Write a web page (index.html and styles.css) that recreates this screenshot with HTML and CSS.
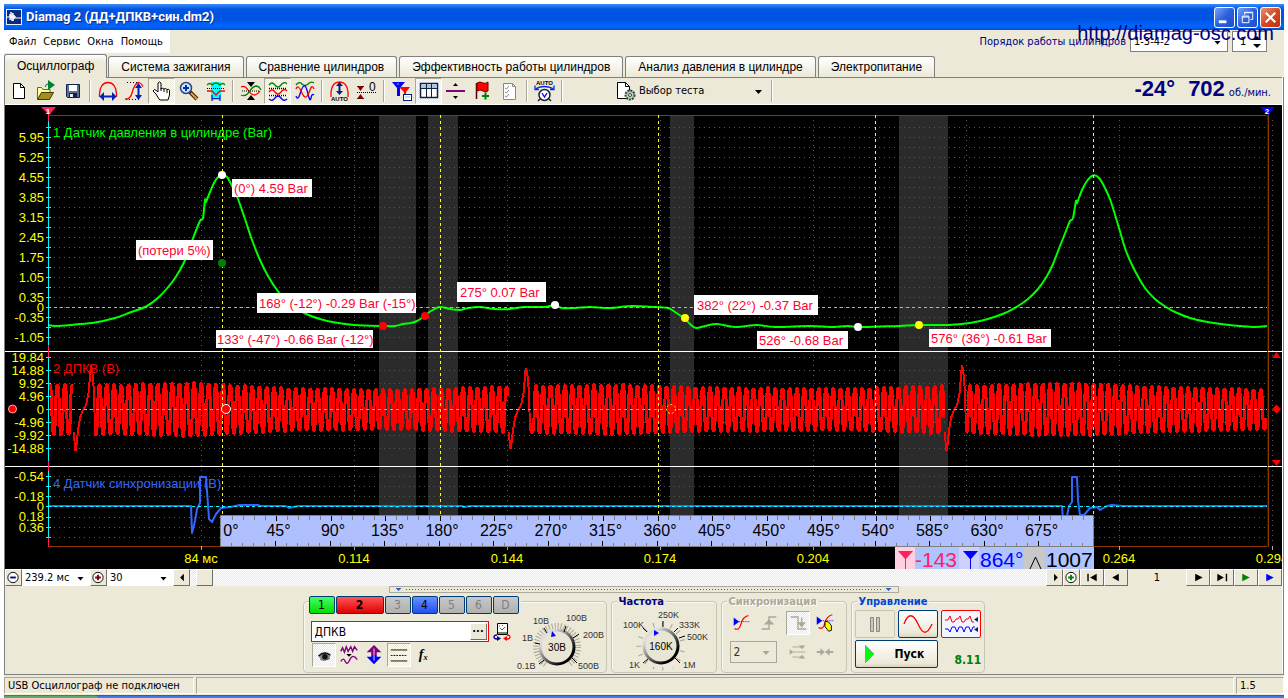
FILE: index.html
```html
<!DOCTYPE html>
<html lang="ru">
<head>
<meta charset="utf-8">
<title>Diamag 2</title>
<link rel="stylesheet" href="styles.css">
</head>
<body>
<div class="window">
  <header class="titlebar">
    <svg class="app-icon" viewBox="0 0 16 16"><rect width="16" height="16" fill="#e8f0ff"/><rect x="1" y="1" width="14" height="14" fill="#0a2a7a"/><path d="M1 8h3V5v6l1-6V3l1 9 1-8v8l1-6v4l1-3v2h6" fill="none" stroke="#fff"/></svg>
    <h1 class="title">Diamag 2 (ДД+ДПКВ+син.dm2)</h1>
    <button class="win-btn" aria-label="Свернуть"><svg viewBox="0 0 20 20"><rect x="4" y="13" width="8" height="3" fill="#fff"/></svg></button>
    <button class="win-btn" aria-label="Восстановить"><svg viewBox="0 0 20 20" fill="none" stroke="#fff"><path d="M7 7V4.500h8.500V12H13M7 5h8.500M4.500 8.500h7v7h-7zM4.500 9.500h7"/></svg></button>
    <button class="win-btn close" aria-label="Закрыть"><svg viewBox="0 0 20 20"><path d="M5 5l10 10M15 5L5 15" stroke="#fff" stroke-width="2.200"/></svg></button>
  </header>

  <div class="menurow">
    <nav class="menu"><button>Файл</button><button>Сервис</button><button>Окна</button><button>Помощь</button></nav>
    <div class="order">
      <label for="order">Порядок работы цилиндров</label>
      <span class="drop order-drop"><select id="order"><option>1-3-4-2</option></select></span>
      <span class="spin"><input type="text" value="1" aria-label="Цилиндр"><svg viewBox="0 0 8 14"><path d="M4 1l4 4H0zM0 9h8l-4 4z"/></svg></span>
      <a class="site" href="#">http://diamag-osc.com</a>
    </div>
  </div>

  <nav class="tabs">
    <button class="tab active">Осциллограф</button><button class="tab">Система зажигания</button><button class="tab">Сравнение цилиндров</button><button class="tab">Эффективность работы цилиндров</button><button class="tab">Анализ давления в цилиндре</button><button class="tab">Электропитание</button>
  </nav>

  <main class="page">
    <div class="toolbar">
      <button class="tool" aria-label="Новый"><svg viewBox="0 0 24 24"><path d="M6.500 4.500h7l4 4v11h-11z" fill="#fff" stroke="#000"/><path d="M13.500 4.500v4h4" fill="none" stroke="#000"/></svg></button>
      <button class="tool" aria-label="Открыть"><svg viewBox="0 0 24 24"><path d="M3.500 20.500v-12h4l1.500 2h7v3" fill="#ffffa0" stroke="#806000"/><path d="M3.500 20.500l4-7h12l-4 7z" fill="#a09020" stroke="#403800"/><path d="M11 8q1-4 4-3" fill="none" stroke="#007020"/><path d="M14 1l7 5-7 5z" fill="#008030"/></svg></button>
      <button class="tool" aria-label="Сохранить"><svg viewBox="0 0 24 24"><path d="M5.500 5.500h13v13h-12l-1-1z" fill="#607090" stroke="#102050"/><rect x="8" y="6" width="8" height="6" fill="#fff"/><rect x="8" y="14" width="8" height="4" fill="#102050"/><rect x="9" y="15" width="3" height="3" fill="#eee"/></svg></button>
      <span class="sep"></span>
      <button class="tool" aria-label="Масштаб времени"><svg viewBox="0 0 24 24" fill="none"><path d="M3.500 18v-3C3.500 8 7 3.500 12 3.500S20.500 8 20.500 15v3" stroke="#f00" stroke-width="1.300"/><path d="M5 17.500h14" stroke="#0020c0" stroke-width="2"/><path d="M8 13v9l-4.500-4.500zM16 13v9l4.500-4.500z" fill="#0020c0"/></svg></button>
      <button class="tool" aria-label="Масштаб амплитуды"><svg viewBox="0 0 24 24" fill="none"><path d="M4 3.500h12M3 20.500h14" stroke="#000" stroke-dasharray="1 2"/><path d="M2 20q5 1 7-6Q12 3 16 3.500q3 1 4 4" stroke="#f00" stroke-width="1.300"/><path d="M15.500 6v13" stroke="#0020c0" stroke-width="2"/><path d="M12 9l3.500-5L19 9zM12 16h7l-3.500 5z" fill="#0020c0"/></svg></button>
      <button class="tool pressed" aria-label="Рука"><svg viewBox="0 0 24 24"><path d="M9 20l-3-5-3-3q1-3 4 0l1 1V4q1.500-2 3 0v6q1-1.500 3 0 2-1 3 .5 2-1 2.500 1V16l-1.500 5H10z" fill="#fff" stroke="#000"/><path d="M11 9v3M14 10v3M17 11v3" stroke="#000"/></svg></button>
      <button class="tool" aria-label="Лупа"><svg viewBox="0 0 24 24"><path d="M13 13l7 7" stroke="#402010" stroke-width="4"/><path d="M14 14l6 6" stroke="#e8a020" stroke-width="2"/><circle cx="9" cy="9" r="5.500" fill="#c8e8ff" stroke="#304080" stroke-width="1.500"/><path d="M6 9h6M9 6v6" stroke="#0030b0" stroke-width="2"/></svg></button>
      <button class="tool" aria-label="Окно"><svg viewBox="0 0 24 24" fill="none"><rect x="7" y="3" width="10" height="15" fill="#0ff"/><path d="M3 6q3-3 5 0 4-4 8 0 3-3 5 0" stroke="#080" stroke-width="1.300"/><path d="M3 9.500h18" stroke="#000" stroke-dasharray="1 1"/><path d="M3 12h5l4 4 4-4h5" stroke="#f00" stroke-width="1.300"/><path d="M8 16v6M16 16v6M8 19.500h8" stroke="#0020c0" stroke-width="1.300"/></svg></button>
      <span class="sep"></span>
      <button class="tool" aria-label="Совместить"><svg viewBox="0 0 24 24" fill="none"><path d="M2 8q4-2 7 3t7 5q3-1 5-4" stroke="#f00" stroke-width="1.300"/><path d="M2 16q5 2 8-3t7-6q3 0 5 4" stroke="#080" stroke-width="1.300"/><path d="M3 12h18" stroke="#000" stroke-dasharray="1 1"/><path d="M8 3h8l-4 5zM8 21h8l-4-5z" fill="#000"/></svg></button>
      <button class="tool pressed" aria-label="Разнести"><svg viewBox="0 0 24 24" fill="none" stroke-width="1.300"><path d="M3 6q3-4 6 0t6 0 6-1" stroke="#080"/><path d="M3 13q3-4 6 0t6 0 6-1" stroke="#f00"/><path d="M3 20q3 3 6-1t6 0 6 1" stroke="#00f"/><path d="M3 9.500h18M3 16.500h18" stroke="#000" stroke-dasharray="1 1"/></svg></button>
      <button class="tool" aria-label="Наложить"><svg viewBox="0 0 24 24" fill="none" stroke-width="1.300"><path d="M3 6q3-4 6-1t6 0 6-1" stroke="#080"/><path d="M3 17q2 5 4-2t4-8 4 8 3 4 3-3" stroke="#00f"/><path d="M3 10q2-5 5 2t5 6 4-7 4-1" stroke="#f00"/></svg></button>
      <span class="sep"></span>
      <button class="tool" aria-label="Авто"><svg viewBox="0 0 24 24" fill="none"><path d="M3 18V13Q4 3 11.500 3T20 13v5" stroke="#f00" stroke-width="1.300"/><path d="M11.500 4v10" stroke="#002080" stroke-width="2"/><path d="M8 7l3.500-4L15 7zM8 12h7l-3.500 4z" fill="#002080"/><text x="3" y="22" class="icon-text">AUTO</text></svg></button>
      <button class="tool" aria-label="Ноль"><svg viewBox="0 0 24 24"><path d="M2 7h7l-3.500 5zM2 20h7l-3.500-5z" fill="#800000"/><path d="M2 7.500h7M2 19.500h7" stroke="#800000"/><path d="M2 13.500h19" stroke="#000" stroke-dasharray="1 1"/><text x="14" y="12" class="icon-plain">0</text></svg></button>
      <span class="sep"></span>
      <button class="tool" aria-label="Маркеры"><svg viewBox="0 0 24 24"><path d="M2 3h13l-5 6v8H7V9z" fill="#00f"/><path d="M9 8h11l-4 5v6h-2v-6z" fill="#f00"/><rect x="13.500" y="15.500" width="8" height="6" fill="#fff" stroke="#002080"/><path d="M15 18h5M7 5h2" stroke="#9bf"/></svg></button>
      <button class="tool pressed" aria-label="Таблица"><svg viewBox="0 0 24 24"><rect x="3.500" y="4.500" width="17" height="14" fill="#fff" stroke="#102040" stroke-width="1.500"/><path d="M4 6h16v3H4z" fill="#9ec8f0"/><path d="M4 9.500h16M9.500 5v13M14.500 5v13" stroke="#102040"/></svg></button>
      <button class="tool" aria-label="Линия"><svg viewBox="0 0 24 24"><path d="M2 11h19v2H2z" fill="#800080"/><path d="M9 7h5l-2.500-3zM9 17h5l-2.500 3z"/></svg></button>
      <button class="tool" aria-label="Флаг"><svg viewBox="0 0 24 24"><path d="M5.500 4v16" stroke="#500" stroke-width="1.500"/><path d="M6 4q3-2 6 0 3 1 5-1v9q-3 2-5 0-3-2-6 0z" fill="#f00" stroke="#700"/><path d="M11 17h7M14.500 13.500v7" stroke="#008000" stroke-width="2"/></svg></button>
      <button class="tool" aria-label="Отчёт"><svg viewBox="0 0 24 24" fill="#fff" stroke="#888"><path d="M5.500 4.500h9l3 3v13h-12z"/><path d="M14.500 4.500v3h3M7 9l1.500 1L11 7M7 13l1.500 1L11 11M7 17l1.500 1L11 15" fill="none"/></svg></button>
      <span class="sep"></span>
      <button class="tool" aria-label="Автотест"><svg viewBox="0 0 24 24"><text x="3" y="6" class="icon-text">AUTO</text><path d="M3 9.500q8-4 17 0M2 6.500v4h4M21 6.500v4h-4" fill="none" stroke="#0030e0" stroke-width="1.300"/><circle cx="11.500" cy="16" r="5.500" fill="#fff" stroke="#223" stroke-width="1.500"/><path d="M9 14l2.500 4 2.500-4" fill="none" stroke="#00f" stroke-width="1.300"/><path d="M7 20l-2 2M16 20l2 2" stroke="#223" stroke-width="1.500"/></svg></button>
      <span class="sep"></span>
      <span class="drop test"><svg viewBox="0 0 20 20"><path d="M1.500 1.500h8l4 4v12h-12z" fill="#fff" stroke="#000"/><path d="M9.500 1.500v4h4" fill="none" stroke="#000"/><circle cx="14" cy="14" r="4.500" fill="#b8d0b0" stroke="#344" stroke-width="2" stroke-dasharray="2 1"/><circle cx="14" cy="14" r="1.500" fill="#fff" stroke="#344"/></svg><select aria-label="Тест"><option>Выбор теста</option></select></span>
      <span class="sep"></span>
      <output class="readout"><b>-24°</b><b>702</b><span>об./мин.</span></output>
    </div>

    <svg class="scope" id="scope" viewBox="5 105 1277 464" role="img" aria-label="Осциллограмма">
      <rect x="5" y="105" width="1277" height="464"/>
      <g class="band"><path d="M379 116h37v399h-37zM428 116h30v399h-30zM670 116h24v399h-24zM899 116h49v399h-49z"/></g>
      <g id="grid"></g>
      <path d="M48 115.500h1221M48 546.500h1221M1268.500 115v432" stroke="#8b3500"/>
      <path d="M5 351.500h1277M5 466.500h1277" stroke="#fff"/>
      <g class="channel-name">
        <text x="53" y="137" fill="#0f0">1 Датчик давления в цилиндре (Bar)</text>
        <text x="53" y="373" fill="#f00">2 ДПКВ (В)</text>
        <text x="53" y="488" fill="#36f">4 Датчик синхронизации (В)</text>
      </g>
      <g id="traces"></g>
      <path d="M222.500 115v400M440.500 115v400M658.500 115v400M875.500 115v400M1093.500 115v424" stroke="#ff0" stroke-dasharray="3 3"/>
      <path d="M48 307.500h1219M48 409.500h1219M48 506.500h1219" stroke="#0ff" stroke-dasharray="3 3"/>
      <path d="M48.500 112v435" stroke="#ff2060"/>
      <path d="M48.500 121v224M48.500 357v104M48.500 471v67" stroke="#0ff"/>
      <path d="M1267.500 112v435" stroke="#00f"/>
      <path d="M41 107h15l-7 8z" fill="#ff2060"/><path d="M1260 107h15l-7 8z" fill="#00f"/>
      <g class="marker-num"><text x="48" y="114">1</text><text x="1267" y="114">2</text></g>
      <g fill="#f00"><circle cx="12.500" cy="409" r="4" stroke="#faa"/><circle cx="226" cy="409" r="4.500" stroke="#fff"/><circle cx="671" cy="409" r="4.500" stroke="#ff0" stroke-dasharray="2 2"/>
      <path d="M1272 358h9l-4.500-6zM1272 460h9l-4.500 6zM1272 409l4.500-4.500 4.500 4.500-4.500 4.500z"/></g>
      <path d="M232 179h80v18h-80zM136 240h77v20h-77zM257 293h159v20H257zM216 330h157v18H216zM457 282h89v20h-89zM694 295h124v20H694zM757 331h91v18h-91zM929 329h122v18H929z" fill="#fff"/>
      <g class="points"><circle cx="222" cy="175" r="4" fill="#fff"/><circle cx="222" cy="263" r="4" fill="#008000"/><circle cx="383" cy="326" r="4" fill="#f00"/><circle cx="425" cy="316" r="4" fill="#f00"/><circle cx="555" cy="305" r="4" fill="#fff"/><circle cx="685" cy="318" r="4" fill="#ff0"/><circle cx="858" cy="327" r="4" fill="#fff"/><circle cx="919" cy="325" r="4" fill="#ff0"/></g>
      <g class="note"><text x="234" y="193">(0°) 4.59 Bar</text><text x="138" y="255">(потери 5%)</text><text x="259" y="308">168° (-12°) -0.29 Bar (-15°)</text><text x="217" y="344">133° (-47°) -0.66 Bar (-12°)</text><text x="460" y="297">275° 0.07 Bar</text><text x="697" y="310">382° (22°) -0.37 Bar</text><text x="759" y="345">526° -0.68 Bar</text><text x="931" y="343">576° (36°) -0.61 Bar</text></g>
      <g id="axis"></g>
      <g id="ruler"></g>
      <path d="M895 547h20v22h-20z" fill="#ffd0e0"/><path d="M915 547h44v22h-44zM979 547h45v22h-45zM1045 547h49v22h-49z" fill="#b0c4ff"/><path d="M959 547h20v22h-20z" fill="#d0d0ff"/><path d="M1024 547h21v22h-21z" fill="#c8c8c8"/>
      <path d="M898 551h15l-7 8v10h-1v-10z" fill="#ff2060"/><path d="M963 551h15l-7 8v10h-1v-10z" fill="#00f"/><path d="M1030 569l5.500-12 5.500 12" fill="none" stroke="#000"/>
      <g class="measure"><text x="915" y="567" fill="#ff2060">-143</text><text x="980" y="567" fill="#00f">864°</text><text x="1046" y="567">1007</text></g>
    </svg>

    <div class="navrow">
      <button class="nav round" aria-label="Сжать"><svg viewBox="0 0 16 16"><circle cx="8" cy="8" r="5.500" fill="#fff" stroke="#000"/><path d="M5 8h6" stroke="#000080" stroke-width="2"/></svg></button>
      <span class="drop span"><select aria-label="Развёртка"><option>239.2 мс</option></select></span>
      <button class="nav round" aria-label="Растянуть"><svg viewBox="0 0 16 16"><circle cx="8" cy="8" r="5.500" fill="#fff" stroke="#000"/><path d="M5 8h6M8 5v6" stroke="#800000" stroke-width="2"/></svg></button>
      <span class="drop step"><select aria-label="Шаг"><option>30</option></select></span>
      <button class="nav" aria-label="Влево"><svg viewBox="0 0 16 16"><path d="M10 4v8L6 8z"/></svg></button>
      <div class="trough"><div class="thumb"></div></div>
      <button class="nav" aria-label="Вправо"><svg viewBox="0 0 16 16"><path d="M7 4v8l4-4z"/></svg></button>
      <button class="nav round" aria-label="Добавить"><svg viewBox="0 0 16 16"><circle cx="8" cy="8" r="5.500" fill="#fff" stroke="#000"/><path d="M5 8h6M8 5v6" stroke="#008000" stroke-width="2"/></svg></button>
      <button class="nav wide" aria-label="Первый"><svg viewBox="0 0 16 16"><path d="M13 4v8L6 8zM3 4h1.500v8H3z"/></svg></button>
      <button class="nav wide" aria-label="Назад"><svg viewBox="0 0 16 16"><path d="M11 4v8L4 8z"/></svg></button>
      <output class="frame">1</output>
      <button class="nav wide" aria-label="Вперёд"><svg viewBox="0 0 16 16"><path d="M5 4v8l8-4z"/></svg></button>
      <button class="nav wide" aria-label="Последний"><svg viewBox="0 0 16 16"><path d="M3 4v8l7-4zM12 4h1.500v8H12z"/></svg></button>
      <button class="nav wide" aria-label="Воспроизвести"><svg viewBox="0 0 16 16"><path d="M4 4v8l8-4z" fill="#008000"/></svg></button>
      <button class="nav wide" aria-label="Повтор"><svg viewBox="0 0 16 16"><path d="M4 4v8l8-4z" fill="#00f"/></svg></button>
    </div>
    <div class="splitter"><i></i><span></span><i></i></div>

    <div class="panels">
      <section class="group channels">
        <div class="channel-left">
          <div class="ch-row"><button class="ch green">1</button><button class="ch red">2</button><button class="ch">3</button><button class="ch blue">4</button><button class="ch">5</button><button class="ch">6</button><button class="ch">D</button></div>
          <div class="name-row"><div class="name-box"><input type="text" value="ДПКВ" aria-label="Имя канала"><button aria-label="Выбрать">···</button></div>
            <svg viewBox="0 0 18 18"><path d="M4.500 .5h10v11h-10z" fill="#fff" stroke="#000"/><path d="M5 9h9v2H5z" fill="#6a8a6a"/><path d="M7 5l2 2 3-3M6 3h1M9 2.500h1" fill="none" stroke="#666"/><path d="M4 12q-3 0-3 2 0 2 3 2" fill="none" stroke="#000090" stroke-width="1.300"/><path d="M4 13l4 2.500-4 2.500z" fill="#000090"/><path d="M14 12q3 0 3 2 0 2-3 2" fill="none" stroke="#f00" stroke-width="1.300"/><path d="M14 13l-4 2.500 4 2.500z" fill="#f00"/></svg></div>
          <div class="icon-row">
            <button class="mini pressed" aria-label="Видимость"><svg viewBox="0 0 24 24"><path d="M6 13q6-7 13-1l-1 4q-5 3-10 0z" fill="#888"/><path d="M6 13q6-6 13-1" fill="none" stroke="#111" stroke-width="1.500"/><circle cx="13" cy="14" r="3" fill="#111"/><path d="M8 17q5 2 10-1" fill="none" stroke="#444"/></svg></button>
            <button class="mini" aria-label="Фильтр"><svg viewBox="0 0 24 24" fill="none" stroke="#800080" stroke-width="1.500"><path d="M3 8l2-4 2 5 2-6 2 5 3-5 2 5 2-5 3 4"/><path d="M3 19q3-5 5 0t5-2 8 0"/><path d="M9 11h6l-3 3z" fill="#000" stroke="none"/></svg></button>
            <button class="mini" aria-label="Инверсия"><svg viewBox="0 0 24 24"><path d="M12 1l8 8h-5v3H9V9H4z" fill="#800080"/><path d="M12 22l8-8h-5v-2H9v2H4z" fill="#00f"/><path d="M12 5v13" stroke="#ece9d8"/></svg></button>
            <button class="mini pressed" aria-label="Линии"><svg viewBox="0 0 24 24" stroke="#000"><path d="M3 6.500h18M3 18.500h18"/><path d="M3 12.500h18" stroke-dasharray="2 1"/></svg></button>
            <button class="mini fx">fₓ</button>
          </div>
        </div>
        <svg class="knob" viewBox="512 600 94 72"><g class="knob-face" transform="translate(557 646)"><circle r="21" fill="none" stroke="#aaa592" stroke-width="6" stroke-dasharray="1 2"/><path d="M-17 24L0 4l17 20z" fill="#ece9d8"/><circle r="17" fill="#e8e5d5" stroke="url(#rim)" stroke-width="3"/><path d="M-13 13l-5 4M-17-3l-5-1M-10-14l-3-5M7-15l2-6M16-9l6-4M15 11l5 5" stroke="#000"/><path d="M-5-16l4 5-5 1z" fill="#00f"/></g>
          <g class="knob-text"><text x="517" y="668">0.1В</text><text x="522" y="640">1В</text><text x="533" y="623">10В</text><text x="566" y="620">100В</text><text x="583" y="637">200В</text><text x="578" y="668">500В</text></g><text x="557" y="650" class="knob-value">30В</text></svg>
      </section>
      <section class="group freq"><h2>Частота</h2>
        <svg class="knob" viewBox="612 604 103 68"><defs><linearGradient id="rim" x1="0" y1="0" x2="1" y2="1"><stop offset=".2" stop-color="#ddd"/><stop offset=".8" stop-color="#000"/></linearGradient></defs><g transform="translate(661 646)"><circle r="22" fill="none" stroke="#aaa592" stroke-width="5" stroke-dasharray="1 8" stroke-dashoffset="4"/><path d="M-15 21L0 0l15 21z" fill="#ece9d8"/><circle r="17" fill="#e8e5d5" stroke="url(#rim)" stroke-width="3"/><path d="M-13 13l-5 4M-14-14l-4-4M2-19v-6M13-14l4-4M18-8l6-2M14 12l5 5" stroke="#000"/><path d="M-7-16l5 3-5 3z" fill="#00f"/></g>
          <g class="knob-text"><text x="629" y="668">1K</text><text x="623" y="628">100K</text><text x="658" y="618">250K</text><text x="679" y="628">333K</text><text x="687" y="640">500K</text><text x="683" y="668">1M</text></g><text x="661" y="650" class="knob-value">160K</text></svg>
      </section>
      <section class="group sync"><h2>Синхронизация</h2>
        <div class="sync-grid">
          <button class="sy" aria-label="Синхросигнал"><svg viewBox="0 0 24 24" fill="none"><path d="M5 18q5 3 7-5t8-9" stroke="#f00" stroke-width="1.300"/><path d="M8 10.500h13" stroke="#00f" stroke-dasharray="1 1"/><path d="M4 6v9l6-4.500z" fill="#00f"/></svg></button>
          <button class="sy" disabled aria-label="Фронт"><svg viewBox="0 0 24 24" fill="none" stroke="#aca899" stroke-width="1.500"><path d="M4 18.500h8V5.500h8"/><path d="M8 13l4-4 4 4z" fill="#aca899"/></svg></button>
          <button class="sy pressed" disabled aria-label="Спад"><svg viewBox="0 0 24 24" fill="none" stroke="#aca899" stroke-width="1.500"><path d="M4 5.500h8v13h9M16 6v8"/><path d="M13 12h6l-3 4z" fill="#aca899"/></svg></button>
          <button class="sy" aria-label="Курсор"><svg viewBox="0 0 24 24" fill="none"><path d="M5 17q5 3 7-5t8-9" stroke="#f00" stroke-width="1.300"/><path d="M8 9.500h14" stroke="#00f" stroke-dasharray="1 1"/><path d="M3 5v9l6-4.500z" fill="#00f"/><path d="M12 10l4 1 3 4v5l-3 1-4-5z" fill="#ff0" stroke="#000"/></svg></button>
          <span class="drop source"><select aria-label="Источник" disabled><option>2</option></select></span>
          <button class="sy" disabled aria-label="Уровень"><svg viewBox="0 0 24 24" stroke="#aca899" fill="#aca899"><path d="M7 6.500h10M7 17.500h10M7 12h14" fill="none"/><path d="M4 9v6l4-3zM14 5h7l-3.500 4zM14 19h7l-3.500-4z" stroke="none"/></svg></button>
          <button class="sy" disabled aria-label="Сжатие"><svg viewBox="0 0 24 24" fill="#aca899"><path d="M3 11h4V8l5 4-5 4v-3H3zM21 11h-4V8l-5 4 5 4v-3h4z"/></svg></button>
        </div>
      </section>
      <section class="group control"><h2>Управление</h2>
        <div class="control-grid">
          <button class="big off" aria-label="Пауза"><svg viewBox="0 0 38 26" fill="#c8c6bb" stroke="#8a8880"><path d="M14.500 6.500h3v14h-3zM20.500 6.500h3v14h-3z"/></svg></button>
          <button class="big" aria-label="Синус"><svg viewBox="0 0 38 26"><path d="M5 13C9 2 14 2 19 13s9 11 14 0" fill="none" stroke="#f00" stroke-width="1.300"/></svg></button>
          <button class="big alert" aria-label="Сигналы"><svg viewBox="0 0 38 26" fill="none"><path d="M3 9h3l2-4 2 6h2l2-3h2l2-3 2 6h2l2-3h2l2-3 2 6h2" stroke="#f00"/><path d="M3 18h3l2 3 2-5h3l2 5 2-5h3l2 5 2-5h3l2 5 2-5h2" stroke="#00f"/><path d="M36 6v5l-4-2.500zM36 16v5l-4-2.500z" fill="#102060"/></svg></button>
          <button class="big start"><svg viewBox="0 0 10 18"><path d="M0 0v18l9-9z" fill="#0f0" stroke="#7a9"/></svg>Пуск</button>
          <output class="version">8.11</output>
        </div>
      </section>
    </div>
  </main>
  <footer class="status"><span class="conn">USB Осциллограф не подключен</span><span class="fill"></span><span class="ver">1.5</span></footer>
  <div class="taskbar"><i></i></div>
</div>
<script src="script.js"></script>
</body>
</html>
```
FILE: styles.css
```css
* { box-sizing: border-box; }
body { margin: 0; padding: 4px 4px 0; background: #fff; color: #000; font: 11px/14px "DejaVu Sans Condensed", "Noto Sans", sans-serif; }
button, select, input { font: inherit; color: inherit; margin: 0; }
button { padding: 0; border: 0; background: none; }
h1, h2 { margin: 0; }
svg { display: block; }
.window { background: #ece9d8; }

.titlebar { display: flex; align-items: center; gap: 2px; height: 26px; padding: 0 3px 0 2px; background: linear-gradient(#3a8cf8, #0054e3 20%, #0054e3 60%, #0066ff 85%, #0050d8); }
.app-icon { width: 16px; height: 16px; margin-right: 2px; }
.title { flex: 1; color: #fff; font: bold 13px/18px Roboto, "Noto Sans", sans-serif; text-shadow: 1px 1px #0a2a8a; }
.win-btn { width: 21px; height: 21px; border: 1px solid #fff; border-radius: 3px; background: linear-gradient(135deg, #7aa2f5, #2a60dc 50%, #1c50c8); }
.win-btn.close { background: linear-gradient(135deg, #f09070, #d84820 50%, #c03010); }

.menurow { display: flex; justify-content: space-between; align-items: flex-start; height: 24px; }
.menu { display: flex; gap: 7px; padding: 5px 7px 4px 5px; background: #fff; }
.order { position: relative; display: flex; align-items: center; gap: 4px; padding: 1px 17px 0 0; color: navy; }
.order-drop { width: 98px; height: 21px; border: 1px solid #808080; background: #fff; color: #000; }
.spin { display: flex; align-items: center; width: 35px; height: 21px; padding: 0 5px; border: 1px solid #808080; background: #fff; color: #000; }
.spin input { flex: 1; min-width: 0; padding: 0 2px; border: 0; background: none; }
.spin svg { width: 8px; height: 14px; }
.site { position: absolute; right: 10px; top: -9px; color: navy; font: 20px/24px "Liberation Sans", sans-serif; text-decoration: none; white-space: nowrap; }

.drop { position: relative; display: flex; align-items: center; }
.drop select { flex: 1; min-width: 0; padding: 0 3px; border: 0; outline: 0; background: none; appearance: none; }
.drop::after { content: ""; position: absolute; right: 6px; top: calc(50% - 1px); width: 7px; height: 4px; background: #000; clip-path: polygon(0 0, 100% 0, 50% 100%); }

.tabs { display: flex; align-items: flex-end; gap: 2px; height: 23px; }
.tab { height: 21px; padding: 0 12px; border: 1px solid #808080; border-bottom: 0; border-radius: 3px 3px 0 0; background: linear-gradient(#fff, #ece9d8); font: 12px/19px "Liberation Sans", sans-serif; white-space: nowrap; }
.tab.active { height: 24px; margin: 0 -1px -1px 0; position: relative; background: linear-gradient(#fff, #ece9d8 30%); }

.page { border-left: 1px solid #808080; border-right: 1px solid #808080; border-bottom: 1px solid #808080; box-shadow: inset -1px 0 #fff; padding-right: 1px; }
.toolbar { display: flex; align-items: center; height: 28px; border-top: 1px solid #808080; border-bottom: 1px solid #fff; }
.tool { width: 27px; height: 26px; padding: 1px 1px 1px 2px; }
.tool svg { width: 24px; height: 24px; }
.pressed { border: 1px solid; border-color: #aca899 #fff #fff #aca899; background: repeating-conic-gradient(#fff 0 25%, #ece9d8 0 50%) 0 0 / 2px 2px; }
.tool.pressed { padding: 0 0 0 1px; }
.icon-text { font: bold 6px "Liberation Sans", sans-serif; fill: #000; }
.icon-plain { font: 12px "Liberation Sans", sans-serif; fill: #000; }
.sep { width: 8px; height: 22px; background: linear-gradient(90deg, #aca899 50%, #fff 50%) center / 2px 100% no-repeat; }
.test { width: 202px; padding-left: 50px; }
.test svg { width: 20px; height: 20px; }
.readout { display: flex; align-items: baseline; margin-left: auto; padding-right: 11px; color: navy; font: 11px/24px "DejaVu Sans Condensed", sans-serif; }
.readout b { font: bold 22px/24px "Liberation Sans", sans-serif; margin-right: 13px; }
.readout b + b { margin-right: 4px; }

.scope { width: 100%; height: auto; font-family: "Liberation Sans", sans-serif; }
.band { fill: #2b2b2b; }
.channel-name, .note { font-size: 13px; }
.note { fill: #ff0030; }
.axis-text { font-size: 13px; fill: #ff0; }
.ruler-text { font-size: 16px; fill: #000; }
.measure { font-size: 21px; }
.marker-num { font-size: 8px; font-weight: bold; fill: #fff; text-anchor: middle; }
.trace { fill: none; stroke-width: 2; stroke-linejoin: round; }
.trace.dense { stroke-width: 3; }

.navrow { display: flex; height: 17px; }
.nav { flex: none; width: 17px; border: 1px solid; border-color: #fff #716f64 #716f64 #fff; background: #ece9d8; }
.nav svg { width: 16px; height: 15px; margin: 0 auto; }
.nav.round svg { margin-left: -1px; }
.nav.wide { width: 24px; }
.navrow .drop { background: #fff; }
.span { width: 68px; }
.step { width: 66px; }
.trough { flex: 1; background: repeating-conic-gradient(#fff 0 25%, #ece9d8 0 50%) 0 0 / 2px 2px; }
.thumb { width: 17px; height: 17px; margin-left: 6px; border: 1px solid; border-color: #fff #716f64 #716f64 #fff; background: #ece9d8; }
.frame { width: 58px; text-align: center; line-height: 17px; }
.splitter { display: flex; align-items: center; width: 510px; height: 7px; margin: 0 auto; padding: 0 6px; gap: 4px; border: 1px solid #aca899; }
.splitter i { width: 6px; height: 3px; background: #2a5cc0; clip-path: polygon(0 0, 100% 0, 50% 100%); }
.splitter span { flex: 1; height: 1px; background: repeating-linear-gradient(90deg, #2a5cc0 0 1px, transparent 1px 3px); }

.panels { display: flex; justify-content: center; gap: 4px; padding: 8px 0 1px; }
.group { position: relative; height: 72px; border: 1px solid #c8c5b2; border-radius: 4px; box-shadow: inset 1px 1px #fafaf0; }
.group h2 { position: absolute; left: 5px; top: -7px; padding: 0 2px; background: #ece9d8; color: navy; font: bold 11px/14px "DejaVu Sans Condensed", sans-serif; }
.channels { display: flex; width: 304px; }
.channel-left { width: 208px; margin-top: -6px; padding-left: 5px; }
.ch-row { display: flex; gap: 1px; background: #ece9d8; width: 212px; }
.ch { flex: none; width: 26px; height: 18px; border: 1px solid #003c74; border-radius: 2px; background: linear-gradient(#c8c8c8, #b0b0b0); color: #808080; line-height: 16px; font-size: 12px; }
.ch.green { background: linear-gradient(#4f6, #0d0); color: #000; }
.ch.red { width: 48px; background: linear-gradient(#f55, #e00000); color: #000; font-weight: bold; }
.ch.blue { background: linear-gradient(#6a90ff, #2050f0); color: #000; }
.name-row { display: flex; align-items: center; gap: 4px; margin-top: 7px; }
.name-box { display: flex; width: 178px; height: 21px; margin-left: 2px; padding: 1px; border: 1px solid #f00; background: #fff; }
.name-box input { flex: 1; min-width: 0; padding: 0 2px; border: 0; background: none; font-size: 12px; }
.name-box button { width: 17px; height: 17px; border: 1px solid; border-color: #fff #716f64 #716f64 #fff; background: #ece9d8; line-height: 12px; font-weight: bold; }
.name-row svg { width: 18px; height: 18px; }
.icon-row { display: flex; gap: 1px; margin: 1px 0 0 3px; }
.mini { width: 24px; height: 24px; }
.mini svg { width: 22px; height: 22px; }
.mini:not(.pressed) svg { margin: 0 auto; }
.fx { font: italic bold 14px/22px "Liberation Serif", serif; }
.knob { width: 94px; height: 72px; margin-top: -1px; }
.freq { width: 106px; }
.freq .knob { width: 103px; height: 68px; margin-top: 2px; }
.knob-text { font: 9px "Liberation Sans", sans-serif; fill: #333; }
.knob-value { font: 10px "Liberation Sans", sans-serif; text-anchor: middle; }
.sync { width: 126px; }
.sync h2 { color: #aca899; text-shadow: 1px 1px #fff; }
.sync-grid { display: grid; grid-template-columns: repeat(4, 24px); gap: 5px 4px; padding: 9px 0 0 8px; align-items: center; }
.sy { width: 24px; height: 24px; }
.sy svg { width: 22px; height: 22px; }
.source { grid-column: span 2; width: 47px; height: 22px; border: 1px solid #aca899; }
.source select { opacity: 1; color: #333; font-size: 12px; }
.source::after { background: #aca899; }
.control { width: 134px; }
.control h2 { color: #0046d5; }
.control-grid { display: grid; grid-template-columns: repeat(3, 40px); gap: 2px 3px; padding: 8px 0 0 3px; }
.big { height: 28px; border: 1px solid #003c74; border-radius: 2px; background: linear-gradient(#fff, #ece9d8 85%, #d8d4c0); }
.big.off { border-color: #c8c5b2; background: #ece9d8; }
.big.alert { border-color: #f00; background: #f4f4ff; }
.start { grid-column: span 2; display: flex; align-items: center; gap: 20px; padding-left: 9px; font-weight: bold; font-size: 12px; }
.start svg { width: 10px; height: 18px; }
.version { color: #008000; font-weight: bold; font-size: 12px; align-self: end; padding: 0 0 1px 14px; }

.status { display: flex; gap: 2px; padding: 2px 0 1px; }
.status span { height: 17px; padding: 1px 3px; border: 1px solid; border-color: #aca899 #fff #fff #aca899; }
.conn { width: 190px; white-space: nowrap; }
.fill { flex: 1; }
.ver { width: 48px; }
.taskbar { height: 4px; background: linear-gradient(#1c4fc0, #3c8cf0 50%, #2a66dc); }
.taskbar i { display: block; width: 94px; height: 4px; border-radius: 0 4px 0 0; background: linear-gradient(#2f7a2f, #6cb86c 50%, #3c983c); }
```
FILE: script.js
```js
const NS = "http://www.w3.org/2000/svg";
const byId = (id) => document.getElementById(id);

function add(parent, name, attrs, text) {
  const node = document.createElementNS(NS, name);
  for (const key in attrs) node.setAttribute(key, attrs[key]);
  if (text !== undefined) node.textContent = text;
  parent.appendChild(node);
}

const levels = [];
for (let y = 127; y <= 337; y += 10) levels.push(y);
levels.push(357, 370, 383, 396, 409, 422, 435, 448, 476, 486, 496, 506, 517, 527, 537);
const times = [201, 354, 507, 660, 813, 966, 1119, 1272];

// Dotted grid
let rows = "";
for (const y of levels) rows += `M54 ${y + 0.5}H1267`;
let cols = "";
for (const x of times) cols += `M${x + 0.5} 120V545`;
add(byId("grid"), "path", { d: rows + cols, stroke: "#585858", "stroke-dasharray": "1 4" });

// Axis ticks and captions
const axis = byId("axis");
let ticks = "";
for (const y of levels) ticks += `M46 ${y + 0.5}h5`;
add(axis, "path", { d: ticks, stroke: "#0ff" });
const captions = [[307, "0"], [357, "19.84"], [370, "14.88"], [383, "9.92"], [396, "4.96"], [409, "0"],
  [422, "-4.96"], [435, "-9.92"], [448, "-14.88"], [476, "-0.54"], [496, "-0.18"], [506, "0"], [516, "0.18"], [527, "0.36"]];
for (let i = 0; i < 11; i++) captions.push([137 + i * 20, (5.95 - i * 0.7).toFixed(2)]);
for (const [y, value] of captions) add(axis, "text", { x: 44, y: y + 5, "text-anchor": "end", class: "axis-text" }, value);
["84 мс", "0.114", "0.144", "0.174", "0.204", "", "0.264", "0.294"].forEach((t, i) => {
  add(axis, "path", { d: `M${times[i] + 0.5} 546v4`, stroke: "#aaa" });
  add(axis, "text", { x: times[i], y: 563, "text-anchor": "middle", class: "axis-text" }, t);
});

// Crank angle ruler
const ruler = byId("ruler");
add(ruler, "path", { d: "M220.5 515.500h873v31h-873z", fill: "#b0c0ff", stroke: "#808080" });
let major = "", minor = "";
for (let i = 1; i < 80; i++) {
  const x = Math.round(221.5 + i * 10.9) + 0.5;
  if (i % 5 === 0) major += `M${x} 516v5M${x - 1} 541v5`;
  else minor += `M${x} 516v4M${x - 1} 543v3`;
}
add(ruler, "path", { d: minor, stroke: "#808080" });
add(ruler, "path", { d: major, stroke: "#000" });
for (let i = 0; i < 16; i++) {
  add(ruler, "text", { x: i ? 224 + i * 54.5 : 231, y: 536, "text-anchor": "middle", class: "ruler-text" }, `${i * 45}°`);
}

const line = (points) => "M" + points.map((p) => p.join(" ")).join("L");
function smooth(p) {
  let d = `M${p[0]}`;
  for (let i = 0; i < p.length - 1; i++) {
    const a = p[i - 1] || p[i], b = p[i], c = p[i + 1], e = p[i + 2] || c;
    d += `C${b[0] + (c[0] - a[0]) / 6} ${b[1] + (c[1] - a[1]) / 6} ${c[0] - (e[0] - b[0]) / 6} ${c[1] - (e[1] - b[1]) / 6} ${c[0]} ${c[1]}`;
  }
  return d;
}
const traces = byId("traces");

// Channel 1: cylinder pressure
add(traces, "path", { class: "trace", stroke: "#0f0", d: smooth([[48, 325], [56, 326], [75, 324.5], [95, 322.5], [115, 318], [130, 312.5], [147, 306], [160, 296], [173, 281], [180, 270], [186, 258], [192, 241], [200, 221], [203, 218], [205, 200], [206, 202], [208, 197], [214, 183], [219, 176], [222, 175], [227, 177], [232, 186], [238, 199], [245, 219], [252, 240], [260, 260], [268, 276], [277, 290], [286, 300], [295, 307], [305, 313.5], [320, 319], [335, 322.5], [354, 325], [383, 326], [395, 326], [403, 324], [411, 323], [417, 321], [424, 316.5], [431, 311], [440, 307], [450, 309], [460, 310], [468, 308], [480, 307], [495, 309], [510, 309], [525, 307], [545, 307], [555, 305], [562, 308], [575, 308], [590, 307], [610, 308], [632, 306], [655, 307], [668, 308], [675, 312], [685, 319], [690, 324], [696, 328], [705, 326], [717, 324], [735, 327], [757, 325], [775, 327], [810, 326], [830, 327], [848, 326], [858, 327], [880, 326.5], [900, 326], [919, 325], [948, 325], [970, 323], [988, 319], [1005, 313], [1018, 306], [1028, 299], [1038, 289], [1047, 276], [1053, 264], [1060, 246], [1066, 231], [1070, 221], [1073, 218], [1076, 201], [1077, 203], [1082, 190], [1087, 181], [1093, 175.5], [1099, 178], [1105, 188], [1111, 202], [1119, 228], [1126, 251], [1134, 269], [1145, 288], [1155, 299], [1166, 307], [1175, 312], [1190, 318], [1205, 321.5], [1225, 324.5], [1240, 326], [1255, 327], [1267, 326]]) });

// Channel 2: crankshaft sensor, teeth between the missing-tooth gaps
const peaks = [[48, 384], [120, 384], [190, 382], [240, 385], [300, 388], [400, 389], [500, 386], [610, 384], [650, 385], [700, 387], [850, 388], [940, 385], [970, 385], [1040, 383], [1090, 383], [1150, 386], [1267, 389]];
function amplitude(x) {
  for (let i = 1; i < peaks.length; i++) {
    const [x0, y0] = peaks[i - 1], [x1, y1] = peaks[i];
    if (x <= x1) return 409.5 - (y0 + (y1 - y0) * (x - x0) / (x1 - x0));
  }
  return 21;
}
function teeth(from, to, peak, period) {
  const out = [];
  for (let x = from; x <= to; x += 1) {
    const s = Math.cos((x - peak) / period * 2 * Math.PI);
    const shaped = Math.sign(s) * Math.pow(Math.abs(s), 0.6);
    out.push([x, Math.round(409.5 - amplitude(x) * shaped)]);
  }
  return out;
}
const gap = (x, low, high) => [[x - 1, 432], [x, low], [x + 1, low], [x + 3, 430], [x + 5, 418], [x + 8, 410], [x + 11, 405], [x + 14, 391], [x + 15, 374], [x + 16, high], [x + 17, high + 2], [x + 19, 392], [x + 20, 431]];
const burst = (points) => add(traces, "path", { class: "trace dense", "shape-rendering": "crispEdges", stroke: "#f00", d: line(points) });
const spike = (points) => add(traces, "path", { class: "trace", "shape-rendering": "crispEdges", stroke: "#f00", d: line(points) });
burst(teeth(49, 73, 50, 7.45));
spike(gap(75, 450, 366));
burst(teeth(95, 508, 99.5, 7.27));
spike(gap(510, 448, 369));
burst(teeth(531, 944, 536, 7.25));
spike(gap(946, 450, 366));
burst(teeth(966, 1266, 970, 7.27));

// Channel 4: synchronisation sensor
add(traces, "path", { class: "trace", stroke: "#36f", d: line([[48, 506], [191, 506], [192, 533], [195, 521], [197, 509], [200, 503], [200, 477], [206, 477], [208, 505], [209, 519], [212, 522], [216, 514], [221, 508], [230, 507], [240, 505], [258, 505], [260, 506], [286, 506], [289, 508], [298, 506], [395, 506], [397, 507], [400, 506], [462, 506], [464, 507], [470, 506], [1062, 506], [1063, 520], [1067, 516], [1069, 506], [1072, 502], [1072, 477], [1077, 477], [1078, 500], [1080, 515], [1084, 515], [1090, 508], [1097, 507], [1100, 510], [1107, 506], [1112, 505], [1123, 506], [1267, 506]]) });
```
